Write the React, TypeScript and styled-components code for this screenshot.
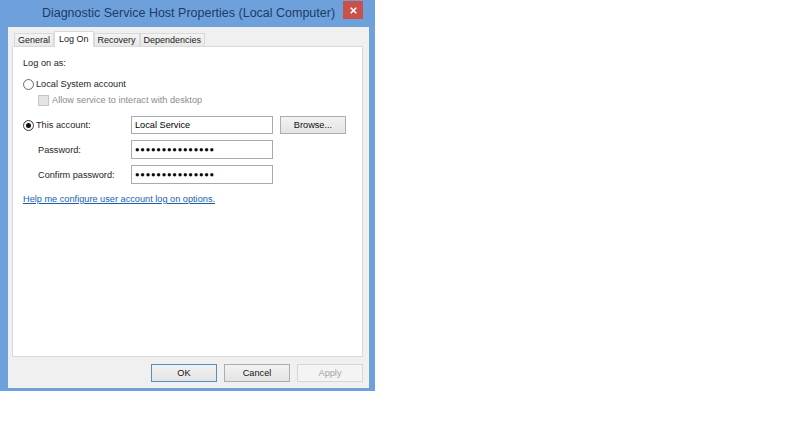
import styled, { createGlobalStyle } from 'styled-components';

const GlobalStyle = createGlobalStyle`
  body {
    margin: 0;
    background: #fff;
    font-family: "Liberation Sans", Arial, sans-serif;
  }
`;

const Window = styled.div`
  width: 375px;
  height: 391px;
  box-sizing: border-box;
  padding: 0 6px 3px 8px;
  background: #6ea1dc;
  display: flex;
  flex-direction: column;
`;

const TitleBar = styled.div`
  height: 27px;
  flex: none;
  display: grid;
  grid-template-columns: 1fr auto 1fr;
  align-items: start;
`;

const Title = styled.h1`
  grid-column: 2;
  margin: 0;
  font-size: 12.5px;
  font-weight: normal;
  line-height: 27px;
  color: #1d3b66;
  white-space: nowrap;
`;

const CloseButton = styled.button`
  grid-column: 3;
  justify-self: end;
  width: 20px;
  height: 18px;
  margin: 1px 6px 0 0;
  padding: 0;
  border: none;
  background: #c9514a;
  display: flex;
  align-items: center;
  justify-content: center;
`;

const Client = styled.div`
  flex: 1;
  background: #f0f0f0;
  padding: 4px 6px 0 4px;
  display: flex;
  flex-direction: column;
`;

const TabStrip = styled.div`
  height: 15px;
  flex: none;
  display: flex;
  align-items: flex-end;
  padding-left: 2px;
  position: relative;
  z-index: 1;
`;

const Tab = styled.div<{ $active?: boolean }>`
  box-sizing: border-box;
  height: ${(p) => (p.$active ? 16 : 13)}px;
  margin-bottom: ${(p) => (p.$active ? -1 : 0)}px;
  padding: 0 ${(p) => (p.$active ? 4 : 3)}px ${(p) => (p.$active ? 2 : 0)}px;
  border: 1px solid #d9d9d9;
  border-bottom: none;
  background: ${(p) => (p.$active ? '#fff' : 'linear-gradient(#f3f3f3, #e8e8e8)')};
  display: flex;
  align-items: center;
  font-size: 9px;
  color: #1a1a1a;
  white-space: nowrap;
`;

const Panel = styled.div`
  height: 311px;
  flex: none;
  box-sizing: border-box;
  background: #fff;
  border: 1px solid #d9d9d9;
  padding: 9px 0 0 10px;
  font-size: 9.2px;
  line-height: 14px;
  color: #1e1e1e;
`;

const Heading = styled.div`
  height: 14px;
`;

const OptionRow = styled.label<{ $indent?: number; $gap?: number; $muted?: boolean }>`
  display: flex;
  align-items: center;
  gap: 2px;
  height: 14px;
  margin-top: ${(p) => p.$gap ?? 7}px;
  padding-left: ${(p) => p.$indent ?? 0}px;
  color: ${(p) => (p.$muted ? '#8c8c8c' : 'inherit')};
  white-space: nowrap;
`;

const Radio = styled.span<{ $checked?: boolean }>`
  box-sizing: border-box;
  width: 11px;
  height: 11px;
  flex: none;
  border-radius: 50%;
  border: 1px solid ${(p) => (p.$checked ? '#3a3a3a' : '#6f6f6f')};
  background: radial-gradient(circle, #fff 40%, #e9e9e9 100%);
  display: flex;
  align-items: center;
  justify-content: center;

  &::after {
    content: '';
    display: ${(p) => (p.$checked ? 'block' : 'none')};
    width: 5px;
    height: 5px;
    border-radius: 50%;
    background: #111;
  }
`;

const Checkbox = styled.span`
  box-sizing: border-box;
  width: 11px;
  height: 11px;
  flex: none;
  margin-right: 1px;
  border: 1px solid #c4c4c4;
  background: #e4e4e4;
`;

const AccountGrid = styled.div`
  display: grid;
  grid-template-columns: 101px 142px 66px;
  grid-template-rows: 18px 19px 19px;
  column-gap: 7px;
  row-gap: 6px;
  margin-top: 9px;
  align-items: center;
`;

const FieldLabel = styled.span<{ $indent?: number }>`
  padding-left: ${(p) => p.$indent ?? 0}px;
  white-space: nowrap;
`;

const Field = styled.input<{ $masked?: boolean }>`
  box-sizing: border-box;
  width: 100%;
  height: 100%;
  margin: 0;
  padding: 0 3px;
  border: 1px solid #a9abb2;
  background: #fff;
  font-family: "Liberation Sans", Arial, sans-serif;
  font-size: ${(p) => (p.$masked ? '7.5px' : '9.2px')};
  letter-spacing: ${(p) => (p.$masked ? '0.8px' : '0')};
  color: #000;
  outline: none;
`;

const Button = styled.button<{ $primary?: boolean; $disabled?: boolean }>`
  box-sizing: border-box;
  width: 66px;
  height: 18px;
  margin: 0;
  padding: 0;
  border: 1px solid ${(p) => (p.$primary ? '#4f8fc4' : p.$disabled ? '#d6d6d6' : '#adadad')};
  background: ${(p) => (p.$disabled ? '#f4f4f4' : 'linear-gradient(#f2f2f2, #e4e4e4)')};
  font-family: "Liberation Sans", Arial, sans-serif;
  font-size: 9.2px;
  color: ${(p) => (p.$disabled ? '#a3a3a3' : '#111')};
`;

const HelpLink = styled.a`
  display: inline-block;
  margin-top: 8px;
  color: #1a62b0;
  text-decoration: underline;
  white-space: nowrap;
`;

const ButtonRow = styled.div`
  display: flex;
  justify-content: flex-end;
  gap: 7px;
  margin-top: 7px;
`;

const DOTS = '\u25CF'.repeat(15);

function App() {
  return (
    <>
      <GlobalStyle />
      <Window>
        <TitleBar>
          <Title>Diagnostic Service Host Properties (Local Computer)</Title>
          <CloseButton aria-label="Close">
            <svg width="7" height="7" viewBox="0 0 7 7">
              <path d="M0.7 0.7 L6.3 6.3 M6.3 0.7 L0.7 6.3" stroke="#fff" strokeWidth="1.6" />
            </svg>
          </CloseButton>
        </TitleBar>
        <Client>
          <TabStrip>
            <Tab>General</Tab>
            <Tab $active>Log On</Tab>
            <Tab>Recovery</Tab>
            <Tab>Dependencies</Tab>
          </TabStrip>
          <Panel>
            <Heading>Log on as:</Heading>
            <OptionRow>
              <Radio />
              Local System account
            </OptionRow>
            <OptionRow $indent={15} $gap={2} $muted>
              <Checkbox />
              Allow service to interact with desktop
            </OptionRow>
            <AccountGrid>
              <OptionRow $gap={0}>
                <Radio $checked />
                This account:
              </OptionRow>
              <Field readOnly value="Local Service" />
              <Button>Browse...</Button>
              <FieldLabel $indent={15}>Password:</FieldLabel>
              <Field readOnly $masked value={DOTS} />
              <span />
              <FieldLabel $indent={15}>Confirm password:</FieldLabel>
              <Field readOnly $masked value={DOTS} />
              <span />
            </AccountGrid>
            <HelpLink href="#">Help me configure user account log on options.</HelpLink>
          </Panel>
          <ButtonRow>
            <Button $primary>OK</Button>
            <Button>Cancel</Button>
            <Button $disabled>Apply</Button>
          </ButtonRow>
        </Client>
      </Window>
    </>
  );
}

export default App;
